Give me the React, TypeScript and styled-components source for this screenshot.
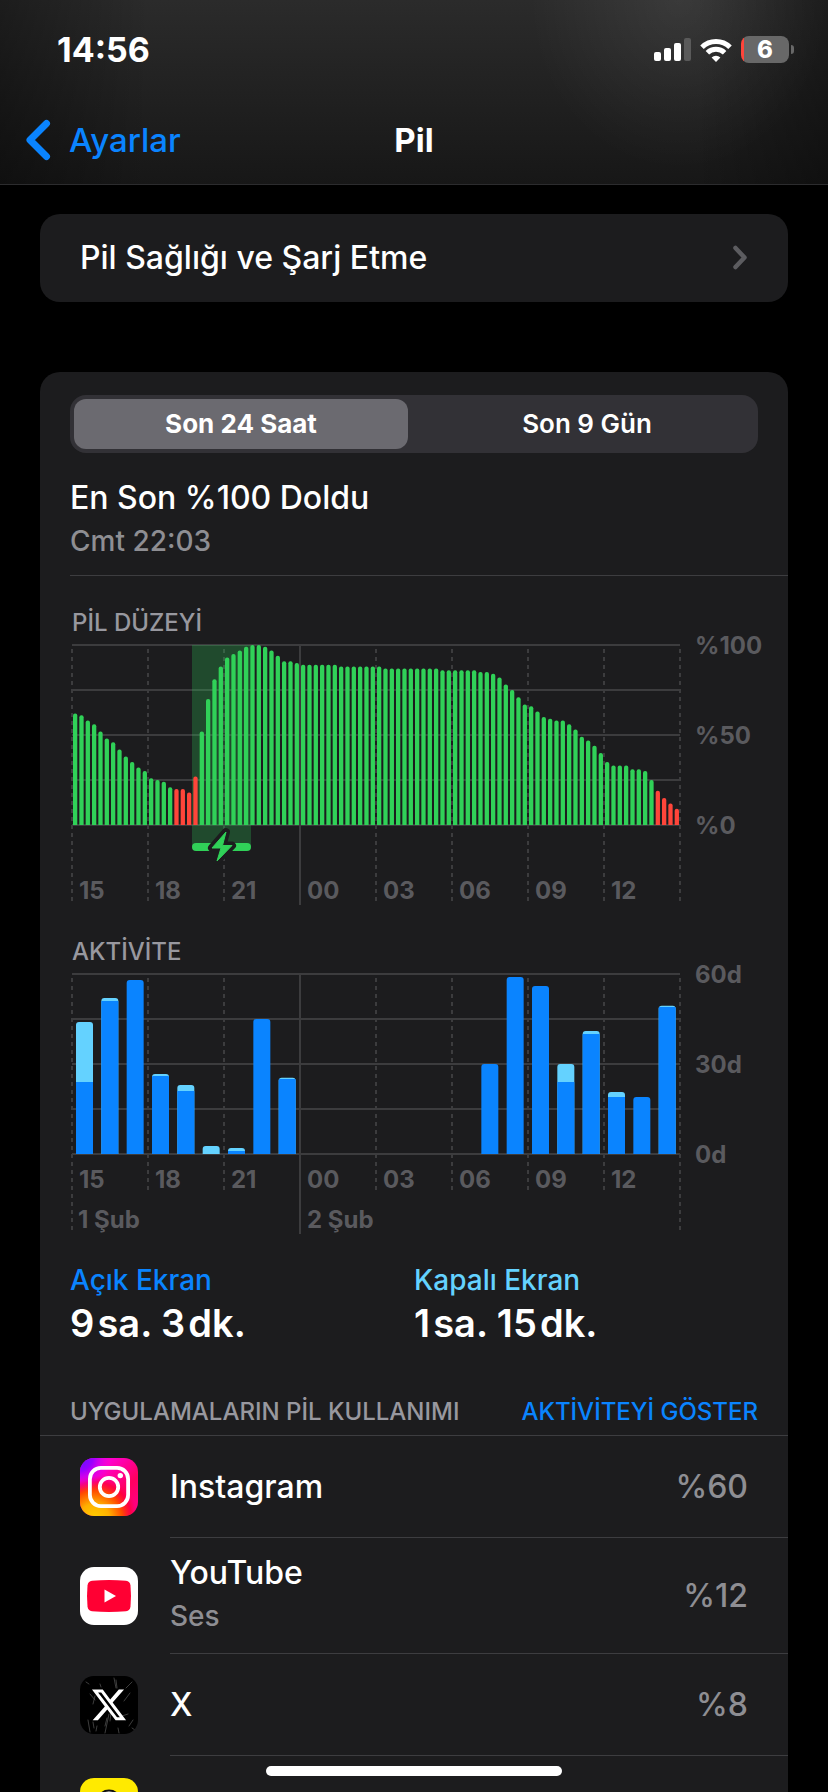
import React, { useState } from 'react';
import styled, { createGlobalStyle } from 'styled-components';

const color = {
  text: '#ffffff',
  secondary: '#8e8e93',
  heading: '#98989f',
  axis: '#5a5a5e',
  grid: '#3c3c3e',
  line: '#3d3d40',
  card: '#1c1c1e',
  blue: '#0a84ff',
  cyan: '#64d2ff',
  green: '#30d158',
  red: '#ff453a',
};

const GlobalStyle = createGlobalStyle`
  * { box-sizing: border-box; }
  body {
    margin: 0;
    background: #000;
    color: ${color.text};
    font-family: Inter, "Liberation Sans", sans-serif;
    font-size: 32px;
    line-height: 40px;
  }
  button { font: inherit; color: inherit; background: none; border: 0; padding: 0; cursor: pointer; }
  h1, h2, h3, p, dl, dt, dd, ul { margin: 0; padding: 0; font-weight: inherit; font-size: inherit; }
  a { color: inherit; text-decoration: none; }
  svg { display: block; }
`;

const Screen = styled.div`
  height: 100vh;
  display: flex;
  flex-direction: column;
  overflow: hidden;
`;

const Header = styled.header`
  flex: none;
  border-bottom: 1px solid #2c2c2e;
  background:
    radial-gradient(ellipse 150px 170px at 82% 0, rgba(255, 255, 255, 0.07), transparent),
    linear-gradient(90deg, rgba(0, 0, 0, 0.34), transparent 18%, transparent 84%, rgba(0, 0, 0, 0.34)),
    linear-gradient(180deg, #2b2b2b, #222222 45%, #171717);
`;

const StatusBar = styled.div`
  height: 98px;
  padding: 1px 34px 0 57px;
  display: flex;
  align-items: center;
  justify-content: space-between;
`;

const Clock = styled.time`
  font-size: 34px;
  font-weight: 700;
`;

const StatusIcons = styled.div`
  display: flex;
  align-items: center;
  gap: 9px;
`;

const NavBar = styled.nav`
  height: 86px;
  padding: 0 25px 2px;
  display: grid;
  grid-template-columns: 1fr auto 1fr;
  align-items: center;
  font-size: 33px;
`;

const BackLink = styled.a`
  display: flex;
  align-items: center;
  gap: 17px;
  font-weight: 500;
  color: ${color.blue};
`;

const NavTitle = styled.h1`
  font-weight: 700;
`;

const Content = styled.main`
  flex: 1;
  min-height: 0;
  overflow-y: auto;
  scrollbar-width: none;
  padding: 29px 40px 0;
  display: flex;
  flex-direction: column;
  gap: 70px;
`;

const Card = styled.section`
  flex: none;
  background: ${color.card};
  border-radius: 20px;
`;

const LinkRow = styled.a`
  display: flex;
  align-items: center;
  justify-content: space-between;
  padding: 24px 40px;
  font-weight: 500;
`;

const Segments = styled.div`
  display: flex;
  gap: 12px;
  margin: 0 30px;
  padding: 4px;
  border-radius: 16px;
  background: #323136;
`;

const Segment = styled.button<{ $active: boolean }>`
  flex: 1;
  height: 50px;
  border-radius: 12px;
  font-size: 26px;
  font-weight: ${(p) => (p.$active ? 700 : 600)};
  background: ${(p) => (p.$active ? '#6b6a70' : 'transparent')};
`;

const BatteryCard = styled(Card)`
  padding-top: 23px;
`;

const LastCharge = styled.div`
  margin: 25px 0 0 30px;
  padding-bottom: 17px;
  border-bottom: 1px solid ${color.line};
  font-weight: 500;
`;

const Caption = styled.p`
  margin-top: 6px;
  font-size: 28px;
  line-height: 34px;
  font-weight: 500;
  color: ${color.secondary};
`;

const ChartSection = styled.section`
  padding: 33px 0 0 30px;
`;

const SectionTitle = styled.h2`
  font-size: 24px;
  line-height: 28px;
  font-weight: 500;
  color: ${color.heading};
`;

const ChartTitle = styled(SectionTitle)`
  padding-left: 2px;
  line-height: 27px;
`;

const Chart = styled.svg`
  width: 100%;
  height: auto;
  overflow: visible;
`;

const AxisText = styled.text`
  fill: ${color.axis};
  font-size: 24px;
  font-weight: 700;
`;

const Totals = styled.dl`
  display: grid;
  grid-template-columns: 1fr 1fr;
  padding: 29px 30px 0;
`;

const TotalLabel = styled.dt<{ $color: string }>`
  font-size: 28px;
  line-height: 34px;
  font-weight: 500;
  color: ${(p) => p.$color};
`;

const TotalValue = styled.dd`
  margin-top: 4px;
  font-size: 38px;
  line-height: 44px;
  font-weight: 600;
`;

const UsageHeader = styled.div`
  display: flex;
  justify-content: space-between;
  padding: 53px 30px 9px;
  border-bottom: 1px solid ${color.line};
`;

const UsageToggle = styled.button`
  font-size: 24px;
  line-height: 28px;
  font-weight: 500;
  color: ${color.blue};
`;

const AppList = styled.ul`
  list-style: none;
`;

const AppRow = styled.li`
  display: flex;
  align-items: center;
  gap: 32px;
  padding-left: 40px;
`;

const AppIcon = styled.svg`
  flex: none;
  width: 58px;
  height: 58px;
  border-radius: 14px;
`;

const AppBody = styled.div<{ $tall: boolean }>`
  flex: 1;
  min-height: ${(p) => (p.$tall ? 116 : 102)}px;
  display: flex;
  align-items: center;
  justify-content: space-between;
  padding-right: 40px;
  border-bottom: 1px solid ${color.line};
`;

const AppLabels = styled.div<{ $tall: boolean }>`
  padding-bottom: ${(p) => (p.$tall ? 6 : 0)}px;
`;

const AppName = styled.h3`
  font-weight: 500;
`;

const AppShare = styled.span`
  font-weight: 500;
  color: ${color.secondary};
`;

const HomeIndicator = styled.div`
  position: fixed;
  left: 50%;
  bottom: 16px;
  width: 296px;
  height: 10px;
  margin-left: -148px;
  border-radius: 5px;
  background: #fff;
`;

/* ---------- charts ---------- */

const PLOT_X = 2;
const PLOT_W = 608;
const PLOT_TOP = 9;
const PLOT_H = 180;
const BASE = PLOT_TOP + PLOT_H;
const STEP = PLOT_W / 8;
const HOURS = ['15', '18', '21', '00', '03', '06', '09', '12'];

const LEVELS = [
  62, 61, 58, 56, 52, 48, 46, 42, 38, 35, 32, 30, 26, 25, 24, 21, 20, 20, 18, 27, 52, 70, 81, 88,
  93, 95, 97, 99, 100, 100, 99, 97, 94, 91, 91, 90, 89, 89, 89, 89, 89, 89, 88, 88, 88, 88, 88, 88,
  88, 87, 87, 87, 87, 87, 87, 87, 87, 87, 86, 86, 86, 86, 86, 86, 85, 85, 84, 82, 78, 75, 71, 67,
  66, 63, 60, 59, 58, 58, 56, 53, 49, 47, 44, 40, 35, 33, 33, 33, 31, 31, 30, 25, 19, 15, 12, 9,
];
const isLow = (i: number) => (i >= 16 && i <= 19) || i >= 92;

// [hour slot, minutes with screen on, total minutes]
const ACTIVITY: [number, number, number][] = [
  [0, 24, 44], [1, 51, 52], [2, 58, 58], [3, 26, 26.7], [4, 21, 23], [5, 0, 2.7], [6, 1, 2],
  [7, 45, 45], [8, 25, 25.4], [16, 30, 30], [17, 59, 59], [18, 56, 56], [19, 24, 30],
  [20, 40, 41], [21, 19, 20.7], [22, 19, 19], [23, 49, 49.4],
];

function topRounded(x: number, y: number, w: number, h: number, r: number) {
  const k = Math.min(r, h);
  return `M${x} ${y + h}V${y + k}Q${x} ${y} ${x + k} ${y}H${x + w - k}Q${x + w} ${y} ${x + w} ${y + k}V${y + h}Z`;
}

function Grid({ labels, hourEnd, edgeEnd, midnightEnd }: {
  labels: string[]; hourEnd: number; edgeEnd: number; midnightEnd: number;
}) {
  return (
    <>
      <g stroke={color.grid} strokeWidth={2}>
        {[0, 1, 2, 3, 4].map((i) => (
          <line key={i} x1={PLOT_X} x2={PLOT_X + PLOT_W} y1={PLOT_TOP + i * 45} y2={PLOT_TOP + i * 45} />
        ))}
        {[0, 1, 2, 3, 4, 5, 6, 7, 8].map((i) => {
          const x = PLOT_X + i * STEP;
          if (i === 3) return <line key={i} x1={x} x2={x} y1={PLOT_TOP} y2={midnightEnd} />;
          const end = i === 0 || i === 8 ? edgeEnd : hourEnd;
          return <line key={i} x1={x} x2={x} y1={PLOT_TOP} y2={end} strokeDasharray="4 4" strokeDashoffset={4} />;
        })}
      </g>
      {labels.map((label, i) => (
        <AxisText key={label} x={PLOT_X + PLOT_W + 15} y={PLOT_TOP + 9 + i * 90}>{label}</AxisText>
      ))}
    </>
  );
}

function HourLabels({ y }: { y: number }) {
  return (
    <>
      {HOURS.map((h, i) => (
        <AxisText key={h} x={PLOT_X + i * STEP + 7} y={y}>{h}</AxisText>
      ))}
    </>
  );
}

const BOLT = 'M156 196L142 212H151L147 225L162 209.5H152.5Z';

function LevelChart() {
  const pitch = PLOT_W / LEVELS.length;
  return (
    <Chart viewBox="0 0 718 269" role="img">
      <Grid labels={['%100', '%50', '%0']} hourEnd={265} edgeEnd={265} midnightEnd={269} />
      <rect x={122} y={PLOT_TOP} width={59} height={202} fill={color.green} fillOpacity={0.26} />
      {LEVELS.map((v, i) => (
        <path
          key={i}
          d={topRounded(PLOT_X + i * pitch + 1, BASE - v * 1.8, 4.3, v * 1.8, 2)}
          fill={isLow(i) ? color.red : color.green}
        />
      ))}
      <rect x={122} y={207} width={59} height={8} rx={4} fill={color.green} />
      <path d={BOLT} fill={color.card} stroke={color.card} strokeWidth={8} strokeLinejoin="round" />
      <path d={BOLT} fill={color.green} stroke={color.green} strokeWidth={1} strokeLinejoin="round" />
      <HourLabels y={263} />
    </Chart>
  );
}

function ActivityChart() {
  const pitch = PLOT_W / 24;
  return (
    <Chart viewBox="0 0 718 269" role="img">
      <Grid labels={['60d', '30d', '0d']} hourEnd={225} edgeEnd={265} midnightEnd={269} />
      {ACTIVITY.map(([slot, on, total]) => {
        const x = PLOT_X + slot * pitch + 4;
        return (
          <g key={slot}>
            <path d={topRounded(x, BASE - total * 3, 17, total * 3, 3)} fill={total > on ? color.cyan : color.blue} />
            {total > on && <path d={topRounded(x, BASE - on * 3, 17, on * 3, total - on < 1 ? 1 : 0)} fill={color.blue} />}
          </g>
        );
      })}
      <HourLabels y={223} />
      <AxisText x={PLOT_X + 6} y={263}>1 Şub</AxisText>
      <AxisText x={PLOT_X + 3 * STEP + 7} y={263}>2 Şub</AxisText>
    </Chart>
  );
}

/* ---------- icons ---------- */

function SignalIcon() {
  return (
    <svg width="37" height="24" viewBox="0 0 37 24" fill="#fff" aria-hidden="true">
      <rect x="0" y="14" width="7" height="9" rx="2" />
      <rect x="10" y="10" width="7" height="13" rx="2" />
      <rect x="20" y="5" width="7" height="18" rx="2" />
      <rect x="30" y="0" width="7" height="23" rx="2" fill="#5a5a5a" />
    </svg>
  );
}

function WifiIcon() {
  return (
    <svg width="32" height="24" viewBox="0 0 32 24" fill="none" stroke="#fff" strokeWidth="5" aria-hidden="true">
      <path d="M2 9.2A20 20 0 0 1 30 9.2" />
      <path d="M7.4 14.8A12.3 12.3 0 0 1 24.6 14.8" />
      <path d="M16 24L11.6 19.4A6.4 6.4 0 0 1 20.4 19.4Z" fill="#fff" stroke="none" />
    </svg>
  );
}

const Battery = styled.div`
  display: flex;
  align-items: center;
  gap: 2px;
`;

const BatteryCell = styled.div`
  width: 48px;
  height: 27px;
  border-radius: 8px;
  background: linear-gradient(90deg, ${color.red} 3px, #686868 3px);
  text-align: center;
  font-size: 24px;
  line-height: 27px;
  font-weight: 800;
`;

const BatteryTip = styled.div`
  width: 3px;
  height: 9px;
  border-radius: 0 3px 3px 0;
  background: #686868;
`;

function InstagramIcon() {
  return (
    <AppIcon viewBox="0 0 58 58" aria-hidden="true">
      <defs>
        <linearGradient id="ig-base" x1="0" y1="0" x2="1" y2="1">
          <stop offset="0" stopColor="#ff00e0" />
          <stop offset="0.3" stopColor="#ff00c8" />
          <stop offset="0.65" stopColor="#ff0060" />
          <stop offset="1" stopColor="#ff0090" />
        </linearGradient>
        <radialGradient id="ig-warm" cx="0.25" cy="1.05" r="0.75">
          <stop offset="0" stopColor="#ffd000" />
          <stop offset="0.35" stopColor="#ffb000" />
          <stop offset="0.65" stopColor="#ff4a00" />
          <stop offset="0.85" stopColor="#ff0030" stopOpacity="0.7" />
          <stop offset="1" stopColor="#ff0050" stopOpacity="0" />
        </radialGradient>
        <radialGradient id="ig-cool" cx="0" cy="0" r="0.55">
          <stop offset="0" stopColor="#5a14ff" />
          <stop offset="0.4" stopColor="#9a00ff" />
          <stop offset="1" stopColor="#f000f0" stopOpacity="0" />
        </radialGradient>
      </defs>
      <rect width="58" height="58" fill="url(#ig-base)" />
      <rect width="58" height="58" fill="url(#ig-warm)" />
      <rect width="58" height="58" fill="url(#ig-cool)" />
      <g fill="none" stroke="#fff" strokeWidth="3.8">
        <rect x="9.9" y="9.9" width="38.2" height="38.2" rx="11" />
        <circle cx="29" cy="29" r="9.2" />
      </g>
      <circle cx="40.3" cy="17.6" r="2.7" fill="#fff" />
    </AppIcon>
  );
}

function YouTubeIcon() {
  return (
    <AppIcon viewBox="0 0 58 58" aria-hidden="true">
      <rect width="58" height="58" fill="#fff" />
      <path
        d="M12 13.8Q29 12.2 46 13.8Q50 14.3 50.5 18.5Q51.5 29 50.5 39.5Q50 43.7 46 44.2Q29 45.8 12 44.2Q8 43.7 7.5 39.5Q6.5 29 7.5 18.5Q8 14.3 12 13.8Z"
        fill="#ff0033"
      />
      <path d="M24.5 22.5V35.5L36 29Z" fill="#fff" />
    </AppIcon>
  );
}

function XIcon() {
  return (
    <AppIcon viewBox="0 0 58 58" aria-hidden="true">
      <rect width="58" height="58" fill="#000" />
      <g stroke="#fff" strokeWidth="0.8" opacity="0.3" strokeLinecap="round">
        <path d="M34 2l2 10M36 4l1 8M29 38L25 57M27 42l-2 8M31 36l-1 9M10 18l5 6M13 28l2-8M46 12l6-6M50 17l-6 8M53 44l-4 6M38 52l1 5M8 44l2 12M13 46l1 6M20 8l1 3M6 6l3 2M42 40l6-2M52 52l3 2M17 50l-1 5" />
      </g>
      <path
        transform="translate(10 10) scale(1.58)"
        d="M18.244 2.25h3.308l-7.227 8.26 8.502 11.24H16.17l-5.214-6.817L4.99 21.75H1.68l7.73-8.835L1.254 2.25H8.08l4.713 6.231zm-1.161 17.52h1.833L7.084 4.126H5.117z"
        fill="#fff"
      />
    </AppIcon>
  );
}

function GhostIcon() {
  return (
    <AppIcon viewBox="0 0 58 58" aria-hidden="true">
      <rect width="58" height="58" fill="#ffea00" />
      <path
        d="M29 12.5c7 0 11 5 11 11v5l4 1-4 4c1 4 4 6 7 7-1 3-5 2-7 5-4-1-6 2-11 2s-7-3-11-2c-2-3-6-2-7-5 3-1 6-3 7-7l-4-4 4-1v-5c0-6 4-11 11-11z"
        fill="#fff" stroke="#111" strokeWidth="1.8" strokeLinejoin="round"
      />
    </AppIcon>
  );
}

function BackChevron() {
  return (
    <svg width="27" height="42" viewBox="0 0 27 42" fill="none" stroke="currentColor" strokeWidth="7" strokeLinecap="round" strokeLinejoin="round" aria-hidden="true">
      <path d="M21.5 4.5L5 21L21.5 37.5" />
    </svg>
  );
}

function DisclosureChevron() {
  return (
    <svg width="16" height="26" viewBox="0 0 16 26" fill="none" stroke="#5c5c60" strokeWidth="4.5" strokeLinecap="round" strokeLinejoin="round" aria-hidden="true">
      <path d="M3.5 3L12.5 12.5L3.5 22" />
    </svg>
  );
}

/* ---------- page ---------- */

const APPS: { icon: React.ReactNode; name?: string; note?: string; share?: string }[] = [
  { icon: <InstagramIcon />, name: 'Instagram', share: '%60' },
  { icon: <YouTubeIcon />, name: 'YouTube', note: 'Ses', share: '%12' },
  { icon: <XIcon />, name: 'X', share: '%8' },
  { icon: <GhostIcon /> },
];

export default function App() {
  const [range, setRange] = useState(0);
  return (
    <Screen>
      <GlobalStyle />
      <Header>
        <StatusBar>
          <Clock>14:56</Clock>
          <StatusIcons>
            <SignalIcon />
            <WifiIcon />
            <Battery>
              <BatteryCell>6</BatteryCell>
              <BatteryTip />
            </Battery>
          </StatusIcons>
        </StatusBar>
        <NavBar>
          <BackLink href="#ayarlar">
            <BackChevron />
            Ayarlar
          </BackLink>
          <NavTitle>Pil</NavTitle>
        </NavBar>
      </Header>

      <Content>
        <Card>
          <LinkRow href="#saglik">
            Pil Sağlığı ve Şarj Etme
            <DisclosureChevron />
          </LinkRow>
        </Card>

        <BatteryCard>
          <Segments>
            {['Son 24 Saat', 'Son 9 Gün'].map((label, i) => (
              <Segment key={label} type="button" $active={range === i} aria-pressed={range === i} onClick={() => setRange(i)}>
                {label}
              </Segment>
            ))}
          </Segments>

          <LastCharge>
            <p>En Son %100 Doldu</p>
            <Caption>Cmt 22:03</Caption>
          </LastCharge>

          <ChartSection>
            <ChartTitle>PİL DÜZEYİ</ChartTitle>
            <LevelChart />
          </ChartSection>
          <ChartSection>
            <ChartTitle>AKTİVİTE</ChartTitle>
            <ActivityChart />
          </ChartSection>

          <Totals>
            <div>
              <TotalLabel $color={color.blue}>Açık Ekran</TotalLabel>
              <TotalValue>9&#8202;sa. 3&#8202;dk.</TotalValue>
            </div>
            <div>
              <TotalLabel $color={color.cyan}>Kapalı Ekran</TotalLabel>
              <TotalValue>1&#8202;sa. 15&#8202;dk.</TotalValue>
            </div>
          </Totals>

          <UsageHeader>
            <SectionTitle>UYGULAMALARIN PİL KULLANIMI</SectionTitle>
            <UsageToggle type="button">AKTİVİTEYİ GÖSTER</UsageToggle>
          </UsageHeader>
          <AppList>
            {APPS.map((app, i) => (
              <AppRow key={i}>
                {app.icon}
                <AppBody $tall={!!app.note}>
                  <AppLabels $tall={!!app.note}>
                    {app.name && <AppName>{app.name}</AppName>}
                    {app.note && <Caption>{app.note}</Caption>}
                  </AppLabels>
                  {app.share && <AppShare>{app.share}</AppShare>}
                </AppBody>
              </AppRow>
            ))}
          </AppList>
        </BatteryCard>
      </Content>
      <HomeIndicator />
    </Screen>
  );
}
